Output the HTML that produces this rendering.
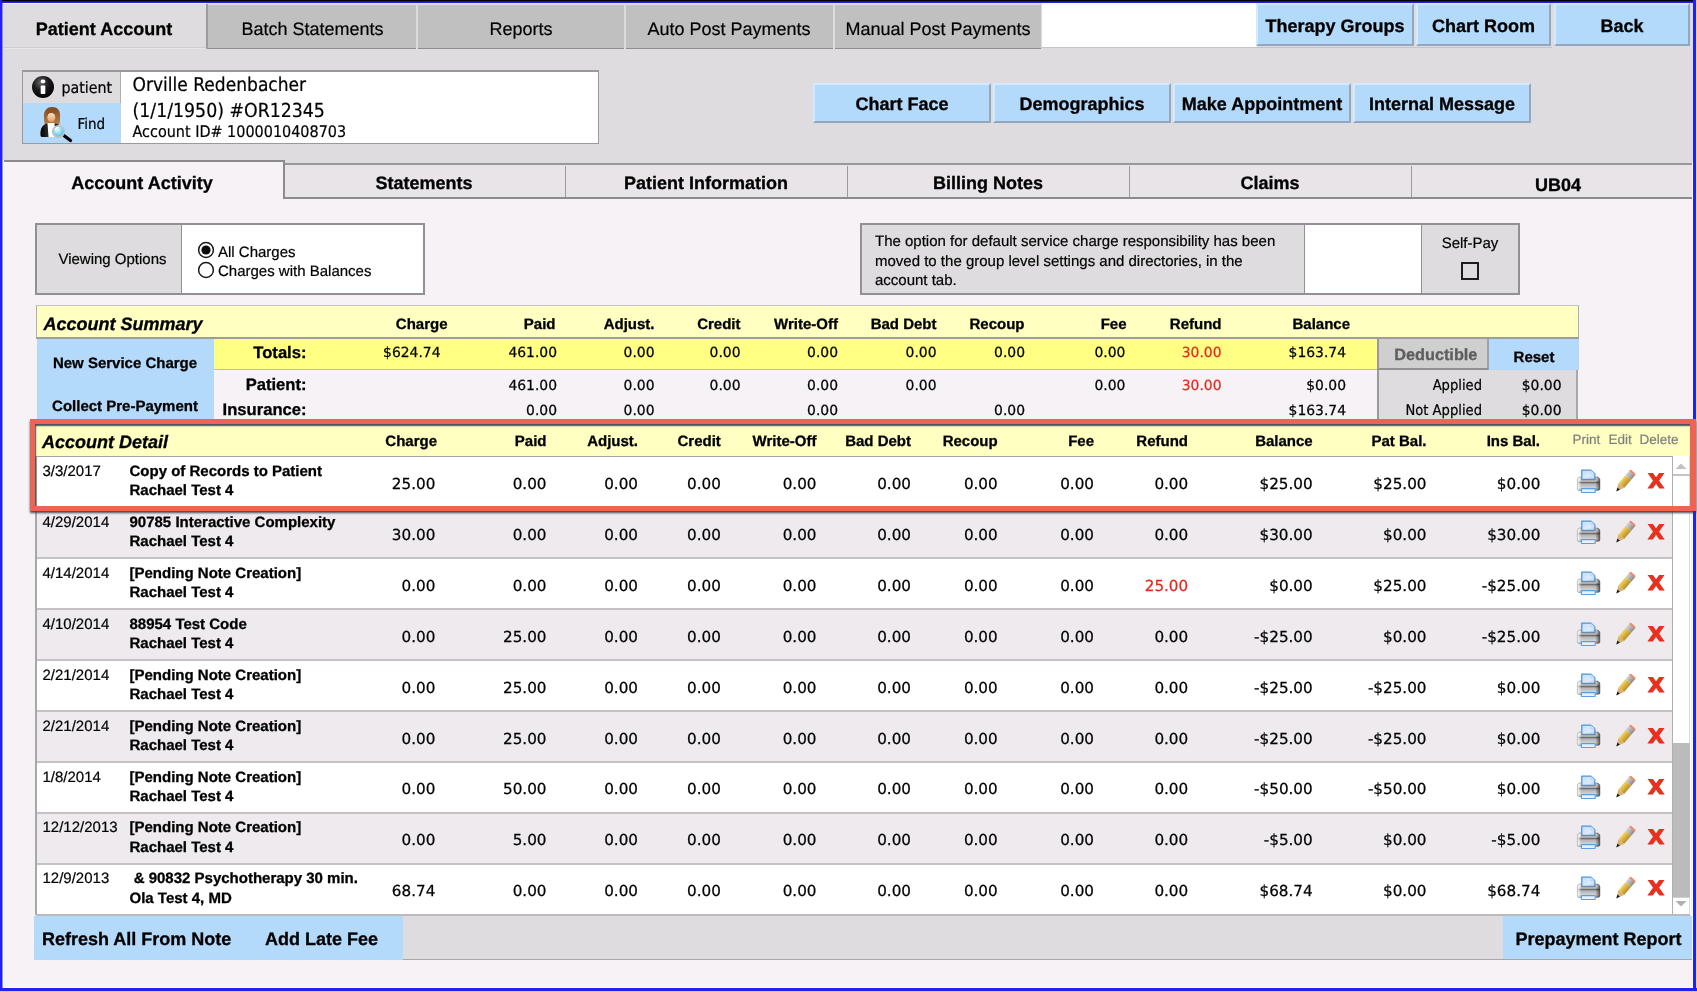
<!DOCTYPE html>
<html><head><meta charset="utf-8"><title>Patient Account</title>
<style>
html,body{margin:0;padding:0;}
body{width:1697px;height:992px;overflow:hidden;position:relative;background:#f6f2f6;font-family:"Liberation Sans", Arial, sans-serif;color:#000;text-rendering:geometricPrecision;}
#app{position:absolute;left:0;top:0;width:1697px;height:992px;will-change:transform;}
.a{position:absolute;white-space:nowrap;}
.t{position:absolute;white-space:nowrap;line-height:1;-webkit-text-stroke:0.2px currentColor;}
.b{font-weight:bold;-webkit-text-stroke:0.3px currentColor;}
.r{text-align:right;}
.c{text-align:center;}
.tah{font-family:"DejaVu Sans Condensed", "DejaVu Sans", "Liberation Sans", sans-serif;}
.btn{position:absolute;background:#b4dafb;box-sizing:border-box;border-top:2px solid #d2eafd;border-left:2px solid #d2eafd;border-right:2px solid #93a8c0;border-bottom:2px solid #93a8c0;font-weight:bold;font-size:18px;text-align:center;white-space:nowrap;-webkit-text-stroke:0.3px #000;}
.tab{position:absolute;background:#c0c0c0;box-sizing:border-box;border-top:1px solid #deded8;border-bottom:1px solid #8e8e8e;}
.red{color:#e8281e;}
.ver{font-family:"DejaVu Sans","Liberation Sans",sans-serif;-webkit-text-stroke:0.25px currentColor;}
</style></head>
<body>
<div id="app">
<div class="a" style="left:0px;top:0px;width:1697px;height:160px;background:#dedcde;"></div>
<div class="a" style="left:206px;top:4px;width:836px;height:45px;background:#dcdcdc;"></div>
<div class="a" style="left:206px;top:4px;width:2px;height:45px;background:#9c9c9c;"></div>
<div class="tab" style="left:208px;top:4px;width:208px;height:45px;"></div>
<div class="tab" style="left:418px;top:4px;width:206px;height:45px;"></div>
<div class="tab" style="left:626px;top:4px;width:207px;height:45px;"></div>
<div class="tab" style="left:835px;top:4px;width:206px;height:45px;"></div>
<div class="a" style="left:3px;top:47px;width:203px;height:1px;background:#cfcdcf;"></div>
<div class="a" style="left:3px;top:48px;width:203px;height:1px;background:#e8e7e8;"></div>
<div class="a" style="left:3px;top:3px;width:203px;height:1px;background:#f4f4f4;"></div>
<div class="t b" style="left:-196px;width:600px;text-align:center;top:20.36px;font-size:18px;">Patient Account</div>
<div class="t " style="left:12.5px;width:600px;text-align:center;top:20.36px;font-size:18px;">Batch Statements</div>
<div class="t " style="left:221px;width:600px;text-align:center;top:20.36px;font-size:18px;">Reports</div>
<div class="t " style="left:429px;width:600px;text-align:center;top:20.36px;font-size:18px;">Auto Post Payments</div>
<div class="t " style="left:638px;width:600px;text-align:center;top:20.36px;font-size:18px;">Manual Post Payments</div>
<div class="a" style="left:1042px;top:3px;width:215px;height:44px;background:#ffffff;"></div>
<div class="a" style="left:1042px;top:47px;width:510px;height:1px;background:#c9c5c5;"></div>
<div class="btn" style="left:1256px;top:3px;width:158px;height:43px;line-height:42px;">Therapy Groups</div>
<div class="btn" style="left:1416px;top:3px;width:135px;height:43px;line-height:42px;">Chart Room</div>
<div class="btn" style="left:1554px;top:3px;width:136px;height:43px;line-height:42px;">Back</div>
<div class="a" style="left:22px;top:70px;width:577px;height:74px;background:#ffffff;box-sizing:border-box;border:1px solid #9a9a9a;border-top:2px solid #9a9a9a;"></div>
<div class="a" style="left:23px;top:72px;width:97px;height:31px;background:#dedcde;border-right:1px solid #b0b0b0;border-bottom:1px solid #c8c8c8;"></div>
<div class="a" style="left:23px;top:103px;width:98px;height:40px;background:#b4dafb;"></div>
<svg class="a" style="left:31px;top:75px" width="24" height="24" viewBox="0 0 24 24">
<defs><radialGradient id="ig" cx="0.4" cy="0.3" r="0.75"><stop offset="0" stop-color="#6a6a6a"/><stop offset="0.45" stop-color="#1c1c1c"/><stop offset="1" stop-color="#000"/></radialGradient></defs>
<circle cx="12" cy="12" r="11" fill="url(#ig)"/>
<rect x="9.7" y="4.6" width="4.6" height="3.6" rx="1.6" fill="#fff"/>
<rect x="9.7" y="10.4" width="4.6" height="8.6" rx="0.8" fill="#fff"/>
</svg>
<svg class="a" style="left:38.8px;top:106.3px" width="36" height="38" viewBox="0 0 36 38">
<defs>
<linearGradient id="hair" x1="0" y1="0" x2="0" y2="1"><stop offset="0" stop-color="#7a4a1e"/><stop offset="1" stop-color="#b8804a"/></linearGradient>
<linearGradient id="skin" x1="0" y1="0" x2="0" y2="1"><stop offset="0" stop-color="#fbe3cc"/><stop offset="1" stop-color="#e39a5a"/></linearGradient>
<linearGradient id="suit" x1="0" y1="0" x2="1" y2="0"><stop offset="0" stop-color="#000"/><stop offset="0.5" stop-color="#3a3a3a"/><stop offset="1" stop-color="#111"/></linearGradient>
<radialGradient id="lens" cx="0.4" cy="0.35" r="0.7"><stop offset="0" stop-color="#e8fbff"/><stop offset="0.6" stop-color="#7fd4ee"/><stop offset="1" stop-color="#4ab6dc"/></radialGradient>
</defs>
<path d="M5 12 C4 4 9 1 13 1 C18 1 22 4 21 12 C21 16 20.5 18 20 19 L6 19 C5.5 17 5 15 5 12Z" fill="url(#hair)"/>
<path d="M1.5 29 C1 22 4 18.5 8 17.5 L17 17.5 C20 18.5 21.5 21 22 25 L22 31 L3 31 C2 31 1.5 30 1.5 29Z" fill="url(#suit)"/>
<path d="M8.5 17 L15.5 17 L16.5 31 L9.5 31Z" fill="#fff"/>
<ellipse cx="12.3" cy="11.5" rx="4" ry="4.6" fill="url(#skin)"/>
<path d="M8 10 C9 6 13 5 17 8 C16 4.5 12 3.5 9.5 5 C8 6.5 7.6 8 8 10Z" fill="#8a5424"/>
<path d="M23.5 28.5 L31.5 34.5" stroke="#000" stroke-width="3.4" stroke-linecap="round"/>
<circle cx="19.5" cy="25.5" r="5.8" fill="url(#lens)" stroke="#b9c6cc" stroke-width="1.6"/>
<path d="M16 24 A4 4 0 0 1 20 21.3" stroke="#fff" stroke-width="1.3" fill="none" opacity="0.9"/>
</svg>
<div class="t tah" style="left:61.5px;top:80.23px;font-size:15.8px;">patient</div>
<div class="t tah" style="left:77.5px;top:117.1px;font-size:15px;">Find</div>
<div class="t tah" style="left:132.5px;top:76.32px;font-size:19px;">Orville Redenbacher</div>
<div class="t tah" style="left:132.5px;top:100.66px;font-size:19.3px;">(1/1/1950) #OR12345</div>
<div class="t tah" style="left:132.5px;top:123.86px;font-size:16px;">Account ID# 1000010408703</div>
<div class="btn" style="left:813px;top:83px;width:178px;height:40px;line-height:38.5px;">Chart Face</div>
<div class="btn" style="left:993px;top:83px;width:178px;height:40px;line-height:38.5px;">Demographics</div>
<div class="btn" style="left:1173px;top:83px;width:178px;height:40px;line-height:38.5px;">Make Appointment</div>
<div class="btn" style="left:1353px;top:83px;width:178px;height:40px;line-height:38.5px;">Internal Message</div>
<div class="a" style="left:2px;top:160px;width:1692px;height:39px;background:#f6f2f6;"></div>
<div class="a" style="left:284px;top:160px;width:1410px;height:3px;background:#dedcde;"></div>
<div class="a" style="left:284px;top:163px;width:1410px;height:36px;background:#e8e4e8;box-sizing:border-box;border-top:2px solid #999799;border-bottom:2px solid #8c8c8c;"></div>
<div class="a" style="left:2px;top:160px;width:283px;height:2px;background:#8c8a8c;"></div>
<div class="a" style="left:283px;top:160px;width:2px;height:39px;background:#8c8c8c;"></div>
<div class="a" style="left:565px;top:166px;width:1px;height:31px;background:#9a9a9a;"></div>
<div class="a" style="left:847px;top:166px;width:1px;height:31px;background:#9a9a9a;"></div>
<div class="a" style="left:1129px;top:166px;width:1px;height:31px;background:#9a9a9a;"></div>
<div class="a" style="left:1411px;top:166px;width:1px;height:31px;background:#9a9a9a;"></div>
<div class="t b" style="left:-158px;width:600px;text-align:center;top:173.96px;font-size:18px;">Account Activity</div>
<div class="t b" style="left:124px;width:600px;text-align:center;top:173.96px;font-size:18px;">Statements</div>
<div class="t b" style="left:406px;width:600px;text-align:center;top:173.96px;font-size:18px;">Patient Information</div>
<div class="t b" style="left:688px;width:600px;text-align:center;top:173.96px;font-size:18px;">Billing Notes</div>
<div class="t b" style="left:970px;width:600px;text-align:center;top:173.96px;font-size:18px;">Claims</div>
<div class="t b" style="left:1258px;width:600px;text-align:center;top:175.96px;font-size:18px;">UB04</div>
<div class="a" style="left:35px;top:223px;width:390px;height:72px;background:#ffffff;box-sizing:border-box;border:2px solid #929092;"></div>
<div class="a" style="left:37px;top:225px;width:144px;height:68px;background:#dedcde;border-right:1px solid #929092;"></div>
<div class="t " style="left:-187.5px;width:600px;text-align:center;top:252.4px;font-size:15px;">Viewing Options</div>
<div class="t " style="left:218px;top:244.9px;font-size:15px;">All Charges</div>
<div class="t " style="left:218px;top:264.1px;font-size:15px;">Charges with Balances</div>
<svg class="a" style="left:197px;top:241px" width="18" height="18" viewBox="0 0 18 18"><circle cx="9" cy="9" r="7.4" fill="#fff" stroke="#1a1a1a" stroke-width="1.5"/><circle cx="9" cy="9" r="4.6" fill="#0a0a0a"/></svg>
<svg class="a" style="left:197px;top:261px" width="18" height="18" viewBox="0 0 18 18"><circle cx="9" cy="9" r="7.4" fill="#fff" stroke="#1a1a1a" stroke-width="1.5"/></svg>
<div class="a" style="left:860px;top:223px;width:660px;height:72px;background:#dedcde;box-sizing:border-box;border:2px solid #929092;"></div>
<div class="a" style="left:1304px;top:225px;width:116px;height:68px;background:#ffffff;border-left:1px solid #929092;border-right:1px solid #929092;"></div>
<div class="t " style="left:875px;top:234.4px;font-size:15px;">The option for default service charge responsibility has been</div>
<div class="t " style="left:875px;top:253.9px;font-size:15px;">moved to the group level settings and directories, in the</div>
<div class="t " style="left:875px;top:273.4px;font-size:15px;">account tab.</div>
<div class="t " style="left:1170px;width:600px;text-align:center;top:235.9px;font-size:15px;">Self-Pay</div>
<div class="a" style="left:1461px;top:262px;width:14px;height:14px;border:2px solid #1c1c1c;background:#dedcde;"></div>
<div class="a" style="left:36px;top:305px;width:1543px;height:34px;background:#ffffc2;box-sizing:border-box;border:1px solid #b0aeb0;border-top:1px solid #c6c2c6;border-bottom:2px solid #9e9c9e;"></div>
<div class="t b" style="left:43.5px;top:315.36px;font-size:18px;font-style:italic;">Account Summary</div>
<div class="t b" style="right:1249.5px;top:316.7px;font-size:15px;">Charge</div>
<div class="t b" style="right:1141.5px;top:316.7px;font-size:15px;">Paid</div>
<div class="t b" style="right:1042.5px;top:316.7px;font-size:15px;">Adjust.</div>
<div class="t b" style="right:956.5px;top:316.7px;font-size:15px;">Credit</div>
<div class="t b" style="right:859px;top:316.7px;font-size:15px;">Write-Off</div>
<div class="t b" style="right:760.5px;top:316.7px;font-size:15px;">Bad Debt</div>
<div class="t b" style="right:672.5px;top:316.7px;font-size:15px;">Recoup</div>
<div class="t b" style="right:570.5px;top:316.7px;font-size:15px;">Fee</div>
<div class="t b" style="right:475.5px;top:316.7px;font-size:15px;">Refund</div>
<div class="t b" style="right:347px;top:316.7px;font-size:15px;">Balance</div>
<div class="a" style="left:37px;top:339px;width:177px;height:80px;background:#b4dafb;"></div>
<div class="a" style="left:214px;top:339px;width:1163px;height:30px;background:#ffff84;border-bottom:1px solid #c0bcc0;"></div>
<div class="t b" style="left:-175px;width:600px;text-align:center;top:356.2px;font-size:15px;">New Service Charge</div>
<div class="t b" style="left:-175px;width:600px;text-align:center;top:399.2px;font-size:15px;">Collect Pre-Payment</div>
<div class="t b" style="right:1390.5px;top:345.05px;font-size:16.6px;">Totals:</div>
<div class="t b" style="right:1390.5px;top:376.85px;font-size:16.6px;">Patient:</div>
<div class="t b" style="right:1390.5px;top:401.85px;font-size:16.6px;">Insurance:</div>
<div class="t ver" style="right:1256.5px;top:346.73px;font-size:13.9px;">$624.74</div>
<div class="t ver" style="right:1140px;top:346.73px;font-size:13.9px;">461.00</div>
<div class="t ver" style="right:1042.5px;top:346.73px;font-size:13.9px;">0.00</div>
<div class="t ver" style="right:956.5px;top:346.73px;font-size:13.9px;">0.00</div>
<div class="t ver" style="right:859px;top:346.73px;font-size:13.9px;">0.00</div>
<div class="t ver" style="right:760.5px;top:346.73px;font-size:13.9px;">0.00</div>
<div class="t ver" style="right:672px;top:346.73px;font-size:13.9px;">0.00</div>
<div class="t ver" style="right:571.7px;top:346.73px;font-size:13.9px;">0.00</div>
<div class="t ver red" style="right:475.5px;top:346.73px;font-size:13.9px;">30.00</div>
<div class="t ver" style="right:351px;top:346.73px;font-size:13.9px;">$163.74</div>
<div class="t ver" style="right:1140px;top:379.73px;font-size:13.9px;">461.00</div>
<div class="t ver" style="right:1042.5px;top:379.73px;font-size:13.9px;">0.00</div>
<div class="t ver" style="right:956.5px;top:379.73px;font-size:13.9px;">0.00</div>
<div class="t ver" style="right:859px;top:379.73px;font-size:13.9px;">0.00</div>
<div class="t ver" style="right:760.5px;top:379.73px;font-size:13.9px;">0.00</div>
<div class="t ver" style="right:571.7px;top:379.73px;font-size:13.9px;">0.00</div>
<div class="t ver red" style="right:475.5px;top:379.73px;font-size:13.9px;">30.00</div>
<div class="t ver" style="right:351px;top:379.73px;font-size:13.9px;">$0.00</div>
<div class="t ver" style="right:1140px;top:405.03px;font-size:13.9px;">0.00</div>
<div class="t ver" style="right:1042.5px;top:405.03px;font-size:13.9px;">0.00</div>
<div class="t ver" style="right:859px;top:405.03px;font-size:13.9px;">0.00</div>
<div class="t ver" style="right:672px;top:405.03px;font-size:13.9px;">0.00</div>
<div class="t ver" style="right:351px;top:405.03px;font-size:13.9px;">$163.74</div>
<div class="a" style="left:1377px;top:339px;width:112px;height:31px;background:#cfcfcf;box-sizing:border-box;border-left:2px solid #9a9a9a;border-right:2px solid #a2a2a2;border-bottom:2px solid #909090;"></div>
<div class="t b" style="left:1135.8px;width:600px;text-align:center;top:347.1px;font-size:16.3px;color:#5e5e5e;">Deductible</div>
<div class="a" style="left:1489px;top:339px;width:90px;height:31px;background:#b4dafb;"></div>
<div class="t b" style="left:1234px;width:600px;text-align:center;top:349.9px;font-size:15px;">Reset</div>
<div class="a" style="left:1377px;top:370px;width:201px;height:49px;background:#dedcde;box-sizing:border-box;border-left:2px solid #9a9a9a;border-right:2px solid #a8a8a8;"></div>
<div class="t tah" style="right:215px;top:378.94px;font-size:14.6px;">Applied</div>
<div class="t tah" style="right:215px;top:403.94px;font-size:14.6px;">Not Applied</div>
<div class="t ver" style="right:135.5px;top:379.73px;font-size:13.9px;">$0.00</div>
<div class="t ver" style="right:135.5px;top:404.73px;font-size:13.9px;">$0.00</div>
<div class="a" style="left:36px;top:425px;width:1655px;height:31px;background:#ffffc2;border-bottom:1px solid #a8a8a8;"></div>
<div class="t b" style="left:42px;top:433.36px;font-size:18px;font-style:italic;">Account Detail</div>
<div class="t b" style="right:1260px;top:434.0px;font-size:15px;">Charge</div>
<div class="t b" style="right:1150.5px;top:434.0px;font-size:15px;">Paid</div>
<div class="t b" style="right:1059px;top:434.0px;font-size:15px;">Adjust.</div>
<div class="t b" style="right:976.2px;top:434.0px;font-size:15px;">Credit</div>
<div class="t b" style="right:880.5px;top:434.0px;font-size:15px;">Write-Off</div>
<div class="t b" style="right:786px;top:434.0px;font-size:15px;">Bad Debt</div>
<div class="t b" style="right:699.3px;top:434.0px;font-size:15px;">Recoup</div>
<div class="t b" style="right:603px;top:434.0px;font-size:15px;">Fee</div>
<div class="t b" style="right:509px;top:434.0px;font-size:15px;">Refund</div>
<div class="t b" style="right:384.29999999999995px;top:434.0px;font-size:15px;">Balance</div>
<div class="t b" style="right:270.5px;top:434.0px;font-size:15px;">Pat Bal.</div>
<div class="t b" style="right:157px;top:434.0px;font-size:15px;">Ins Bal.</div>
<div class="t " style="left:1572.5px;top:432.67px;font-size:13.5px;color:#7f7f7f;">Print</div>
<div class="t " style="left:1608.5px;top:432.67px;font-size:13.5px;color:#7f7f7f;">Edit</div>
<div class="t " style="left:1639.5px;top:432.67px;font-size:13.5px;color:#7f7f7f;">Delete</div>
<div class="a" style="left:35px;top:456px;width:2px;height:459px;background:#a8a8a8;"></div>
<div class="a" style="left:37px;top:456.7px;width:1635px;height:50.9px;background:#ffffff;"></div>
<div class="t " style="left:42.5px;top:464.1px;font-size:15px;">3/3/2017</div>
<div class="t b" style="left:129.5px;top:464.1px;font-size:15px;">Copy of Records to Patient</div>
<div class="t b" style="left:129.5px;top:483.4px;font-size:15px;">Rachael Test 4</div>
<div class="t ver" style="right:1261.7px;top:477.03px;font-size:15.2px;">25.00</div>
<div class="t ver" style="right:1150.5px;top:477.03px;font-size:15.2px;">0.00</div>
<div class="t ver" style="right:1059px;top:477.03px;font-size:15.2px;">0.00</div>
<div class="t ver" style="right:976.2px;top:477.03px;font-size:15.2px;">0.00</div>
<div class="t ver" style="right:880.5px;top:477.03px;font-size:15.2px;">0.00</div>
<div class="t ver" style="right:786px;top:477.03px;font-size:15.2px;">0.00</div>
<div class="t ver" style="right:699.3px;top:477.03px;font-size:15.2px;">0.00</div>
<div class="t ver" style="right:603px;top:477.03px;font-size:15.2px;">0.00</div>
<div class="t ver" style="right:508.79999999999995px;top:477.03px;font-size:15.2px;">0.00</div>
<div class="t ver" style="right:384.29999999999995px;top:477.03px;font-size:15.2px;">$25.00</div>
<div class="t ver" style="right:270.5px;top:477.03px;font-size:15.2px;">$25.00</div>
<div class="t ver" style="right:156.70000000000005px;top:477.03px;font-size:15.2px;">$0.00</div>
<svg class="a" style="left:1575.9px;top:469.1px" width="25" height="24.6" viewBox="0 0 26 26" preserveAspectRatio="none">
<defs>
<linearGradient id="pb" x1="0" y1="0" x2="0" y2="1"><stop offset="0" stop-color="#f0f0f0"/><stop offset="0.3" stop-color="#cacaca"/><stop offset="0.42" stop-color="#6a6a6a"/><stop offset="0.52" stop-color="#b4b4b4"/><stop offset="0.8" stop-color="#d0d0d0"/><stop offset="1" stop-color="#9c9c9c"/></linearGradient>
<linearGradient id="pp" x1="0" y1="0" x2="1" y2="1"><stop offset="0" stop-color="#c4dcf8"/><stop offset="0.6" stop-color="#dcebfb"/><stop offset="1" stop-color="#b4d2f4"/></linearGradient>
<linearGradient id="ps" x1="0" y1="0" x2="1" y2="0"><stop offset="0" stop-color="#ffffff" stop-opacity="0.9"/><stop offset="0.18" stop-color="#ffffff" stop-opacity="0"/><stop offset="0.8" stop-color="#000" stop-opacity="0"/><stop offset="1" stop-color="#000" stop-opacity="0.55"/></linearGradient>
</defs>
<path d="M6 1.3 L15.5 1.3 L19.6 5 L19.6 11 L6 11Z" fill="url(#pp)" stroke="#4b94dc" stroke-width="1.3" stroke-linejoin="round"/>
<path d="M15.5 1.5 L15.5 5 L19.4 5Z" fill="#eaf4fe" stroke="#8fbdee" stroke-width="0.6"/>
<path d="M4.5 8.5 L5.5 8.5 L5.5 11.6 L20.1 11.6 L20.1 8.5 L21.5 8.5 C23.6 8.5 24.8 10 24.8 11.5 L24.8 21 C24.8 22 24.3 22.5 23.3 22.5 L3 22.5 C2 22.5 1.5 22 1.5 21 L1.5 11.5 C1.5 10 2.5 8.5 4.5 8.5Z" fill="url(#pb)" stroke="#858585" stroke-width="0.9"/>
<path d="M4.5 8.5 L5.5 8.5 L5.5 11.6 L20.1 11.6 L20.1 8.5 L21.5 8.5 C23.6 8.5 24.8 10 24.8 11.5 L24.8 21 C24.8 22 24.3 22.5 23.3 22.5 L3 22.5 C2 22.5 1.5 22 1.5 21 L1.5 11.5 C1.5 10 2.5 8.5 4.5 8.5Z" fill="url(#ps)"/>
<rect x="5.6" y="20.8" width="14.4" height="4" rx="0.6" fill="#e8f1fc" stroke="#5a9fe2" stroke-width="1.2"/>
</svg>
<svg class="a" style="left:1612px;top:469.1px" width="25" height="25" viewBox="0 0 24 24">
<defs><linearGradient id="py" x1="0" y1="0" x2="1" y2="0"><stop offset="0" stop-color="#eed878"/><stop offset="0.45" stop-color="#dcb53e"/><stop offset="1" stop-color="#b88c2c"/></linearGradient>
<linearGradient id="pf" x1="0" y1="0" x2="1" y2="0"><stop offset="0" stop-color="#d4d4d4"/><stop offset="0.5" stop-color="#b0b0b0"/><stop offset="1" stop-color="#8a8a8a"/></linearGradient></defs>
<g transform="translate(12.3 12) rotate(41)">
<rect x="-3.6" y="-12.4" width="7.2" height="3" rx="1.4" fill="#f0896c"/>
<rect x="-3.6" y="-10.4" width="7.2" height="5.2" fill="url(#pf)"/>
<rect x="-3.6" y="-5.2" width="7.2" height="10.4" fill="url(#py)"/>
<path d="M-3.6 5.2 L3.6 5.2 L0.9 10.4 L-0.9 10.4Z" fill="#d8b070"/>
<path d="M-1.6 9 L1.6 9 L0 12.6Z" fill="#1a1a1a"/>
</g>
</svg>
<div class="t b" style="left:1355.8px;width:600px;text-align:center;top:472.14px;font-size:19.8px;color:#e8301f;font-family:'DejaVu Sans','Liberation Sans',sans-serif;-webkit-text-stroke:1px #e8301f;transform:scaleX(1.06);">X</div>
<div class="a" style="left:37px;top:507.6px;width:1635px;height:50.9px;background:#eeeaee;"></div>
<div class="t " style="left:42.5px;top:515.0px;font-size:15px;">4/29/2014</div>
<div class="t b" style="left:129.5px;top:515.0px;font-size:15px;">90785 Interactive Complexity</div>
<div class="t b" style="left:129.5px;top:534.3px;font-size:15px;">Rachael Test 4</div>
<div class="t ver" style="right:1261.7px;top:527.93px;font-size:15.2px;">30.00</div>
<div class="t ver" style="right:1150.5px;top:527.93px;font-size:15.2px;">0.00</div>
<div class="t ver" style="right:1059px;top:527.93px;font-size:15.2px;">0.00</div>
<div class="t ver" style="right:976.2px;top:527.93px;font-size:15.2px;">0.00</div>
<div class="t ver" style="right:880.5px;top:527.93px;font-size:15.2px;">0.00</div>
<div class="t ver" style="right:786px;top:527.93px;font-size:15.2px;">0.00</div>
<div class="t ver" style="right:699.3px;top:527.93px;font-size:15.2px;">0.00</div>
<div class="t ver" style="right:603px;top:527.93px;font-size:15.2px;">0.00</div>
<div class="t ver" style="right:508.79999999999995px;top:527.93px;font-size:15.2px;">0.00</div>
<div class="t ver" style="right:384.29999999999995px;top:527.93px;font-size:15.2px;">$30.00</div>
<div class="t ver" style="right:270.5px;top:527.93px;font-size:15.2px;">$0.00</div>
<div class="t ver" style="right:156.70000000000005px;top:527.93px;font-size:15.2px;">$30.00</div>
<svg class="a" style="left:1575.9px;top:520.0px" width="25" height="24.6" viewBox="0 0 26 26" preserveAspectRatio="none">
<defs>
<linearGradient id="pb" x1="0" y1="0" x2="0" y2="1"><stop offset="0" stop-color="#f0f0f0"/><stop offset="0.3" stop-color="#cacaca"/><stop offset="0.42" stop-color="#6a6a6a"/><stop offset="0.52" stop-color="#b4b4b4"/><stop offset="0.8" stop-color="#d0d0d0"/><stop offset="1" stop-color="#9c9c9c"/></linearGradient>
<linearGradient id="pp" x1="0" y1="0" x2="1" y2="1"><stop offset="0" stop-color="#c4dcf8"/><stop offset="0.6" stop-color="#dcebfb"/><stop offset="1" stop-color="#b4d2f4"/></linearGradient>
<linearGradient id="ps" x1="0" y1="0" x2="1" y2="0"><stop offset="0" stop-color="#ffffff" stop-opacity="0.9"/><stop offset="0.18" stop-color="#ffffff" stop-opacity="0"/><stop offset="0.8" stop-color="#000" stop-opacity="0"/><stop offset="1" stop-color="#000" stop-opacity="0.55"/></linearGradient>
</defs>
<path d="M6 1.3 L15.5 1.3 L19.6 5 L19.6 11 L6 11Z" fill="url(#pp)" stroke="#4b94dc" stroke-width="1.3" stroke-linejoin="round"/>
<path d="M15.5 1.5 L15.5 5 L19.4 5Z" fill="#eaf4fe" stroke="#8fbdee" stroke-width="0.6"/>
<path d="M4.5 8.5 L5.5 8.5 L5.5 11.6 L20.1 11.6 L20.1 8.5 L21.5 8.5 C23.6 8.5 24.8 10 24.8 11.5 L24.8 21 C24.8 22 24.3 22.5 23.3 22.5 L3 22.5 C2 22.5 1.5 22 1.5 21 L1.5 11.5 C1.5 10 2.5 8.5 4.5 8.5Z" fill="url(#pb)" stroke="#858585" stroke-width="0.9"/>
<path d="M4.5 8.5 L5.5 8.5 L5.5 11.6 L20.1 11.6 L20.1 8.5 L21.5 8.5 C23.6 8.5 24.8 10 24.8 11.5 L24.8 21 C24.8 22 24.3 22.5 23.3 22.5 L3 22.5 C2 22.5 1.5 22 1.5 21 L1.5 11.5 C1.5 10 2.5 8.5 4.5 8.5Z" fill="url(#ps)"/>
<rect x="5.6" y="20.8" width="14.4" height="4" rx="0.6" fill="#e8f1fc" stroke="#5a9fe2" stroke-width="1.2"/>
</svg>
<svg class="a" style="left:1612px;top:520.0px" width="25" height="25" viewBox="0 0 24 24">
<defs><linearGradient id="py" x1="0" y1="0" x2="1" y2="0"><stop offset="0" stop-color="#eed878"/><stop offset="0.45" stop-color="#dcb53e"/><stop offset="1" stop-color="#b88c2c"/></linearGradient>
<linearGradient id="pf" x1="0" y1="0" x2="1" y2="0"><stop offset="0" stop-color="#d4d4d4"/><stop offset="0.5" stop-color="#b0b0b0"/><stop offset="1" stop-color="#8a8a8a"/></linearGradient></defs>
<g transform="translate(12.3 12) rotate(41)">
<rect x="-3.6" y="-12.4" width="7.2" height="3" rx="1.4" fill="#f0896c"/>
<rect x="-3.6" y="-10.4" width="7.2" height="5.2" fill="url(#pf)"/>
<rect x="-3.6" y="-5.2" width="7.2" height="10.4" fill="url(#py)"/>
<path d="M-3.6 5.2 L3.6 5.2 L0.9 10.4 L-0.9 10.4Z" fill="#d8b070"/>
<path d="M-1.6 9 L1.6 9 L0 12.6Z" fill="#1a1a1a"/>
</g>
</svg>
<div class="t b" style="left:1355.8px;width:600px;text-align:center;top:523.04px;font-size:19.8px;color:#e8301f;font-family:'DejaVu Sans','Liberation Sans',sans-serif;-webkit-text-stroke:1px #e8301f;transform:scaleX(1.06);">X</div>
<div class="a" style="left:37px;top:558.5px;width:1635px;height:50.9px;background:#ffffff;"></div>
<div class="t " style="left:42.5px;top:565.9px;font-size:15px;">4/14/2014</div>
<div class="t b" style="left:129.5px;top:565.9px;font-size:15px;">[Pending Note Creation]</div>
<div class="t b" style="left:129.5px;top:585.2px;font-size:15px;">Rachael Test 4</div>
<div class="t ver" style="right:1261.7px;top:578.83px;font-size:15.2px;">0.00</div>
<div class="t ver" style="right:1150.5px;top:578.83px;font-size:15.2px;">0.00</div>
<div class="t ver" style="right:1059px;top:578.83px;font-size:15.2px;">0.00</div>
<div class="t ver" style="right:976.2px;top:578.83px;font-size:15.2px;">0.00</div>
<div class="t ver" style="right:880.5px;top:578.83px;font-size:15.2px;">0.00</div>
<div class="t ver" style="right:786px;top:578.83px;font-size:15.2px;">0.00</div>
<div class="t ver" style="right:699.3px;top:578.83px;font-size:15.2px;">0.00</div>
<div class="t ver" style="right:603px;top:578.83px;font-size:15.2px;">0.00</div>
<div class="t ver red" style="right:508.79999999999995px;top:578.83px;font-size:15.2px;">25.00</div>
<div class="t ver" style="right:384.29999999999995px;top:578.83px;font-size:15.2px;">$0.00</div>
<div class="t ver" style="right:270.5px;top:578.83px;font-size:15.2px;">$25.00</div>
<div class="t ver" style="right:156.70000000000005px;top:578.83px;font-size:15.2px;">-$25.00</div>
<svg class="a" style="left:1575.9px;top:570.9px" width="25" height="24.6" viewBox="0 0 26 26" preserveAspectRatio="none">
<defs>
<linearGradient id="pb" x1="0" y1="0" x2="0" y2="1"><stop offset="0" stop-color="#f0f0f0"/><stop offset="0.3" stop-color="#cacaca"/><stop offset="0.42" stop-color="#6a6a6a"/><stop offset="0.52" stop-color="#b4b4b4"/><stop offset="0.8" stop-color="#d0d0d0"/><stop offset="1" stop-color="#9c9c9c"/></linearGradient>
<linearGradient id="pp" x1="0" y1="0" x2="1" y2="1"><stop offset="0" stop-color="#c4dcf8"/><stop offset="0.6" stop-color="#dcebfb"/><stop offset="1" stop-color="#b4d2f4"/></linearGradient>
<linearGradient id="ps" x1="0" y1="0" x2="1" y2="0"><stop offset="0" stop-color="#ffffff" stop-opacity="0.9"/><stop offset="0.18" stop-color="#ffffff" stop-opacity="0"/><stop offset="0.8" stop-color="#000" stop-opacity="0"/><stop offset="1" stop-color="#000" stop-opacity="0.55"/></linearGradient>
</defs>
<path d="M6 1.3 L15.5 1.3 L19.6 5 L19.6 11 L6 11Z" fill="url(#pp)" stroke="#4b94dc" stroke-width="1.3" stroke-linejoin="round"/>
<path d="M15.5 1.5 L15.5 5 L19.4 5Z" fill="#eaf4fe" stroke="#8fbdee" stroke-width="0.6"/>
<path d="M4.5 8.5 L5.5 8.5 L5.5 11.6 L20.1 11.6 L20.1 8.5 L21.5 8.5 C23.6 8.5 24.8 10 24.8 11.5 L24.8 21 C24.8 22 24.3 22.5 23.3 22.5 L3 22.5 C2 22.5 1.5 22 1.5 21 L1.5 11.5 C1.5 10 2.5 8.5 4.5 8.5Z" fill="url(#pb)" stroke="#858585" stroke-width="0.9"/>
<path d="M4.5 8.5 L5.5 8.5 L5.5 11.6 L20.1 11.6 L20.1 8.5 L21.5 8.5 C23.6 8.5 24.8 10 24.8 11.5 L24.8 21 C24.8 22 24.3 22.5 23.3 22.5 L3 22.5 C2 22.5 1.5 22 1.5 21 L1.5 11.5 C1.5 10 2.5 8.5 4.5 8.5Z" fill="url(#ps)"/>
<rect x="5.6" y="20.8" width="14.4" height="4" rx="0.6" fill="#e8f1fc" stroke="#5a9fe2" stroke-width="1.2"/>
</svg>
<svg class="a" style="left:1612px;top:570.9px" width="25" height="25" viewBox="0 0 24 24">
<defs><linearGradient id="py" x1="0" y1="0" x2="1" y2="0"><stop offset="0" stop-color="#eed878"/><stop offset="0.45" stop-color="#dcb53e"/><stop offset="1" stop-color="#b88c2c"/></linearGradient>
<linearGradient id="pf" x1="0" y1="0" x2="1" y2="0"><stop offset="0" stop-color="#d4d4d4"/><stop offset="0.5" stop-color="#b0b0b0"/><stop offset="1" stop-color="#8a8a8a"/></linearGradient></defs>
<g transform="translate(12.3 12) rotate(41)">
<rect x="-3.6" y="-12.4" width="7.2" height="3" rx="1.4" fill="#f0896c"/>
<rect x="-3.6" y="-10.4" width="7.2" height="5.2" fill="url(#pf)"/>
<rect x="-3.6" y="-5.2" width="7.2" height="10.4" fill="url(#py)"/>
<path d="M-3.6 5.2 L3.6 5.2 L0.9 10.4 L-0.9 10.4Z" fill="#d8b070"/>
<path d="M-1.6 9 L1.6 9 L0 12.6Z" fill="#1a1a1a"/>
</g>
</svg>
<div class="t b" style="left:1355.8px;width:600px;text-align:center;top:573.94px;font-size:19.8px;color:#e8301f;font-family:'DejaVu Sans','Liberation Sans',sans-serif;-webkit-text-stroke:1px #e8301f;transform:scaleX(1.06);">X</div>
<div class="a" style="left:37px;top:609.4px;width:1635px;height:50.9px;background:#eeeaee;"></div>
<div class="t " style="left:42.5px;top:616.8px;font-size:15px;">4/10/2014</div>
<div class="t b" style="left:129.5px;top:616.8px;font-size:15px;">88954 Test Code</div>
<div class="t b" style="left:129.5px;top:636.1px;font-size:15px;">Rachael Test 4</div>
<div class="t ver" style="right:1261.7px;top:629.73px;font-size:15.2px;">0.00</div>
<div class="t ver" style="right:1150.5px;top:629.73px;font-size:15.2px;">25.00</div>
<div class="t ver" style="right:1059px;top:629.73px;font-size:15.2px;">0.00</div>
<div class="t ver" style="right:976.2px;top:629.73px;font-size:15.2px;">0.00</div>
<div class="t ver" style="right:880.5px;top:629.73px;font-size:15.2px;">0.00</div>
<div class="t ver" style="right:786px;top:629.73px;font-size:15.2px;">0.00</div>
<div class="t ver" style="right:699.3px;top:629.73px;font-size:15.2px;">0.00</div>
<div class="t ver" style="right:603px;top:629.73px;font-size:15.2px;">0.00</div>
<div class="t ver" style="right:508.79999999999995px;top:629.73px;font-size:15.2px;">0.00</div>
<div class="t ver" style="right:384.29999999999995px;top:629.73px;font-size:15.2px;">-$25.00</div>
<div class="t ver" style="right:270.5px;top:629.73px;font-size:15.2px;">$0.00</div>
<div class="t ver" style="right:156.70000000000005px;top:629.73px;font-size:15.2px;">-$25.00</div>
<svg class="a" style="left:1575.9px;top:621.8px" width="25" height="24.6" viewBox="0 0 26 26" preserveAspectRatio="none">
<defs>
<linearGradient id="pb" x1="0" y1="0" x2="0" y2="1"><stop offset="0" stop-color="#f0f0f0"/><stop offset="0.3" stop-color="#cacaca"/><stop offset="0.42" stop-color="#6a6a6a"/><stop offset="0.52" stop-color="#b4b4b4"/><stop offset="0.8" stop-color="#d0d0d0"/><stop offset="1" stop-color="#9c9c9c"/></linearGradient>
<linearGradient id="pp" x1="0" y1="0" x2="1" y2="1"><stop offset="0" stop-color="#c4dcf8"/><stop offset="0.6" stop-color="#dcebfb"/><stop offset="1" stop-color="#b4d2f4"/></linearGradient>
<linearGradient id="ps" x1="0" y1="0" x2="1" y2="0"><stop offset="0" stop-color="#ffffff" stop-opacity="0.9"/><stop offset="0.18" stop-color="#ffffff" stop-opacity="0"/><stop offset="0.8" stop-color="#000" stop-opacity="0"/><stop offset="1" stop-color="#000" stop-opacity="0.55"/></linearGradient>
</defs>
<path d="M6 1.3 L15.5 1.3 L19.6 5 L19.6 11 L6 11Z" fill="url(#pp)" stroke="#4b94dc" stroke-width="1.3" stroke-linejoin="round"/>
<path d="M15.5 1.5 L15.5 5 L19.4 5Z" fill="#eaf4fe" stroke="#8fbdee" stroke-width="0.6"/>
<path d="M4.5 8.5 L5.5 8.5 L5.5 11.6 L20.1 11.6 L20.1 8.5 L21.5 8.5 C23.6 8.5 24.8 10 24.8 11.5 L24.8 21 C24.8 22 24.3 22.5 23.3 22.5 L3 22.5 C2 22.5 1.5 22 1.5 21 L1.5 11.5 C1.5 10 2.5 8.5 4.5 8.5Z" fill="url(#pb)" stroke="#858585" stroke-width="0.9"/>
<path d="M4.5 8.5 L5.5 8.5 L5.5 11.6 L20.1 11.6 L20.1 8.5 L21.5 8.5 C23.6 8.5 24.8 10 24.8 11.5 L24.8 21 C24.8 22 24.3 22.5 23.3 22.5 L3 22.5 C2 22.5 1.5 22 1.5 21 L1.5 11.5 C1.5 10 2.5 8.5 4.5 8.5Z" fill="url(#ps)"/>
<rect x="5.6" y="20.8" width="14.4" height="4" rx="0.6" fill="#e8f1fc" stroke="#5a9fe2" stroke-width="1.2"/>
</svg>
<svg class="a" style="left:1612px;top:621.8px" width="25" height="25" viewBox="0 0 24 24">
<defs><linearGradient id="py" x1="0" y1="0" x2="1" y2="0"><stop offset="0" stop-color="#eed878"/><stop offset="0.45" stop-color="#dcb53e"/><stop offset="1" stop-color="#b88c2c"/></linearGradient>
<linearGradient id="pf" x1="0" y1="0" x2="1" y2="0"><stop offset="0" stop-color="#d4d4d4"/><stop offset="0.5" stop-color="#b0b0b0"/><stop offset="1" stop-color="#8a8a8a"/></linearGradient></defs>
<g transform="translate(12.3 12) rotate(41)">
<rect x="-3.6" y="-12.4" width="7.2" height="3" rx="1.4" fill="#f0896c"/>
<rect x="-3.6" y="-10.4" width="7.2" height="5.2" fill="url(#pf)"/>
<rect x="-3.6" y="-5.2" width="7.2" height="10.4" fill="url(#py)"/>
<path d="M-3.6 5.2 L3.6 5.2 L0.9 10.4 L-0.9 10.4Z" fill="#d8b070"/>
<path d="M-1.6 9 L1.6 9 L0 12.6Z" fill="#1a1a1a"/>
</g>
</svg>
<div class="t b" style="left:1355.8px;width:600px;text-align:center;top:624.84px;font-size:19.8px;color:#e8301f;font-family:'DejaVu Sans','Liberation Sans',sans-serif;-webkit-text-stroke:1px #e8301f;transform:scaleX(1.06);">X</div>
<div class="a" style="left:37px;top:660.3px;width:1635px;height:50.9px;background:#ffffff;"></div>
<div class="t " style="left:42.5px;top:667.7px;font-size:15px;">2/21/2014</div>
<div class="t b" style="left:129.5px;top:667.7px;font-size:15px;">[Pending Note Creation]</div>
<div class="t b" style="left:129.5px;top:687.0px;font-size:15px;">Rachael Test 4</div>
<div class="t ver" style="right:1261.7px;top:680.63px;font-size:15.2px;">0.00</div>
<div class="t ver" style="right:1150.5px;top:680.63px;font-size:15.2px;">25.00</div>
<div class="t ver" style="right:1059px;top:680.63px;font-size:15.2px;">0.00</div>
<div class="t ver" style="right:976.2px;top:680.63px;font-size:15.2px;">0.00</div>
<div class="t ver" style="right:880.5px;top:680.63px;font-size:15.2px;">0.00</div>
<div class="t ver" style="right:786px;top:680.63px;font-size:15.2px;">0.00</div>
<div class="t ver" style="right:699.3px;top:680.63px;font-size:15.2px;">0.00</div>
<div class="t ver" style="right:603px;top:680.63px;font-size:15.2px;">0.00</div>
<div class="t ver" style="right:508.79999999999995px;top:680.63px;font-size:15.2px;">0.00</div>
<div class="t ver" style="right:384.29999999999995px;top:680.63px;font-size:15.2px;">-$25.00</div>
<div class="t ver" style="right:270.5px;top:680.63px;font-size:15.2px;">-$25.00</div>
<div class="t ver" style="right:156.70000000000005px;top:680.63px;font-size:15.2px;">$0.00</div>
<svg class="a" style="left:1575.9px;top:672.7px" width="25" height="24.6" viewBox="0 0 26 26" preserveAspectRatio="none">
<defs>
<linearGradient id="pb" x1="0" y1="0" x2="0" y2="1"><stop offset="0" stop-color="#f0f0f0"/><stop offset="0.3" stop-color="#cacaca"/><stop offset="0.42" stop-color="#6a6a6a"/><stop offset="0.52" stop-color="#b4b4b4"/><stop offset="0.8" stop-color="#d0d0d0"/><stop offset="1" stop-color="#9c9c9c"/></linearGradient>
<linearGradient id="pp" x1="0" y1="0" x2="1" y2="1"><stop offset="0" stop-color="#c4dcf8"/><stop offset="0.6" stop-color="#dcebfb"/><stop offset="1" stop-color="#b4d2f4"/></linearGradient>
<linearGradient id="ps" x1="0" y1="0" x2="1" y2="0"><stop offset="0" stop-color="#ffffff" stop-opacity="0.9"/><stop offset="0.18" stop-color="#ffffff" stop-opacity="0"/><stop offset="0.8" stop-color="#000" stop-opacity="0"/><stop offset="1" stop-color="#000" stop-opacity="0.55"/></linearGradient>
</defs>
<path d="M6 1.3 L15.5 1.3 L19.6 5 L19.6 11 L6 11Z" fill="url(#pp)" stroke="#4b94dc" stroke-width="1.3" stroke-linejoin="round"/>
<path d="M15.5 1.5 L15.5 5 L19.4 5Z" fill="#eaf4fe" stroke="#8fbdee" stroke-width="0.6"/>
<path d="M4.5 8.5 L5.5 8.5 L5.5 11.6 L20.1 11.6 L20.1 8.5 L21.5 8.5 C23.6 8.5 24.8 10 24.8 11.5 L24.8 21 C24.8 22 24.3 22.5 23.3 22.5 L3 22.5 C2 22.5 1.5 22 1.5 21 L1.5 11.5 C1.5 10 2.5 8.5 4.5 8.5Z" fill="url(#pb)" stroke="#858585" stroke-width="0.9"/>
<path d="M4.5 8.5 L5.5 8.5 L5.5 11.6 L20.1 11.6 L20.1 8.5 L21.5 8.5 C23.6 8.5 24.8 10 24.8 11.5 L24.8 21 C24.8 22 24.3 22.5 23.3 22.5 L3 22.5 C2 22.5 1.5 22 1.5 21 L1.5 11.5 C1.5 10 2.5 8.5 4.5 8.5Z" fill="url(#ps)"/>
<rect x="5.6" y="20.8" width="14.4" height="4" rx="0.6" fill="#e8f1fc" stroke="#5a9fe2" stroke-width="1.2"/>
</svg>
<svg class="a" style="left:1612px;top:672.7px" width="25" height="25" viewBox="0 0 24 24">
<defs><linearGradient id="py" x1="0" y1="0" x2="1" y2="0"><stop offset="0" stop-color="#eed878"/><stop offset="0.45" stop-color="#dcb53e"/><stop offset="1" stop-color="#b88c2c"/></linearGradient>
<linearGradient id="pf" x1="0" y1="0" x2="1" y2="0"><stop offset="0" stop-color="#d4d4d4"/><stop offset="0.5" stop-color="#b0b0b0"/><stop offset="1" stop-color="#8a8a8a"/></linearGradient></defs>
<g transform="translate(12.3 12) rotate(41)">
<rect x="-3.6" y="-12.4" width="7.2" height="3" rx="1.4" fill="#f0896c"/>
<rect x="-3.6" y="-10.4" width="7.2" height="5.2" fill="url(#pf)"/>
<rect x="-3.6" y="-5.2" width="7.2" height="10.4" fill="url(#py)"/>
<path d="M-3.6 5.2 L3.6 5.2 L0.9 10.4 L-0.9 10.4Z" fill="#d8b070"/>
<path d="M-1.6 9 L1.6 9 L0 12.6Z" fill="#1a1a1a"/>
</g>
</svg>
<div class="t b" style="left:1355.8px;width:600px;text-align:center;top:675.74px;font-size:19.8px;color:#e8301f;font-family:'DejaVu Sans','Liberation Sans',sans-serif;-webkit-text-stroke:1px #e8301f;transform:scaleX(1.06);">X</div>
<div class="a" style="left:37px;top:711.2px;width:1635px;height:50.9px;background:#eeeaee;"></div>
<div class="t " style="left:42.5px;top:718.6px;font-size:15px;">2/21/2014</div>
<div class="t b" style="left:129.5px;top:718.6px;font-size:15px;">[Pending Note Creation]</div>
<div class="t b" style="left:129.5px;top:737.9px;font-size:15px;">Rachael Test 4</div>
<div class="t ver" style="right:1261.7px;top:731.53px;font-size:15.2px;">0.00</div>
<div class="t ver" style="right:1150.5px;top:731.53px;font-size:15.2px;">25.00</div>
<div class="t ver" style="right:1059px;top:731.53px;font-size:15.2px;">0.00</div>
<div class="t ver" style="right:976.2px;top:731.53px;font-size:15.2px;">0.00</div>
<div class="t ver" style="right:880.5px;top:731.53px;font-size:15.2px;">0.00</div>
<div class="t ver" style="right:786px;top:731.53px;font-size:15.2px;">0.00</div>
<div class="t ver" style="right:699.3px;top:731.53px;font-size:15.2px;">0.00</div>
<div class="t ver" style="right:603px;top:731.53px;font-size:15.2px;">0.00</div>
<div class="t ver" style="right:508.79999999999995px;top:731.53px;font-size:15.2px;">0.00</div>
<div class="t ver" style="right:384.29999999999995px;top:731.53px;font-size:15.2px;">-$25.00</div>
<div class="t ver" style="right:270.5px;top:731.53px;font-size:15.2px;">-$25.00</div>
<div class="t ver" style="right:156.70000000000005px;top:731.53px;font-size:15.2px;">$0.00</div>
<svg class="a" style="left:1575.9px;top:723.6px" width="25" height="24.6" viewBox="0 0 26 26" preserveAspectRatio="none">
<defs>
<linearGradient id="pb" x1="0" y1="0" x2="0" y2="1"><stop offset="0" stop-color="#f0f0f0"/><stop offset="0.3" stop-color="#cacaca"/><stop offset="0.42" stop-color="#6a6a6a"/><stop offset="0.52" stop-color="#b4b4b4"/><stop offset="0.8" stop-color="#d0d0d0"/><stop offset="1" stop-color="#9c9c9c"/></linearGradient>
<linearGradient id="pp" x1="0" y1="0" x2="1" y2="1"><stop offset="0" stop-color="#c4dcf8"/><stop offset="0.6" stop-color="#dcebfb"/><stop offset="1" stop-color="#b4d2f4"/></linearGradient>
<linearGradient id="ps" x1="0" y1="0" x2="1" y2="0"><stop offset="0" stop-color="#ffffff" stop-opacity="0.9"/><stop offset="0.18" stop-color="#ffffff" stop-opacity="0"/><stop offset="0.8" stop-color="#000" stop-opacity="0"/><stop offset="1" stop-color="#000" stop-opacity="0.55"/></linearGradient>
</defs>
<path d="M6 1.3 L15.5 1.3 L19.6 5 L19.6 11 L6 11Z" fill="url(#pp)" stroke="#4b94dc" stroke-width="1.3" stroke-linejoin="round"/>
<path d="M15.5 1.5 L15.5 5 L19.4 5Z" fill="#eaf4fe" stroke="#8fbdee" stroke-width="0.6"/>
<path d="M4.5 8.5 L5.5 8.5 L5.5 11.6 L20.1 11.6 L20.1 8.5 L21.5 8.5 C23.6 8.5 24.8 10 24.8 11.5 L24.8 21 C24.8 22 24.3 22.5 23.3 22.5 L3 22.5 C2 22.5 1.5 22 1.5 21 L1.5 11.5 C1.5 10 2.5 8.5 4.5 8.5Z" fill="url(#pb)" stroke="#858585" stroke-width="0.9"/>
<path d="M4.5 8.5 L5.5 8.5 L5.5 11.6 L20.1 11.6 L20.1 8.5 L21.5 8.5 C23.6 8.5 24.8 10 24.8 11.5 L24.8 21 C24.8 22 24.3 22.5 23.3 22.5 L3 22.5 C2 22.5 1.5 22 1.5 21 L1.5 11.5 C1.5 10 2.5 8.5 4.5 8.5Z" fill="url(#ps)"/>
<rect x="5.6" y="20.8" width="14.4" height="4" rx="0.6" fill="#e8f1fc" stroke="#5a9fe2" stroke-width="1.2"/>
</svg>
<svg class="a" style="left:1612px;top:723.6px" width="25" height="25" viewBox="0 0 24 24">
<defs><linearGradient id="py" x1="0" y1="0" x2="1" y2="0"><stop offset="0" stop-color="#eed878"/><stop offset="0.45" stop-color="#dcb53e"/><stop offset="1" stop-color="#b88c2c"/></linearGradient>
<linearGradient id="pf" x1="0" y1="0" x2="1" y2="0"><stop offset="0" stop-color="#d4d4d4"/><stop offset="0.5" stop-color="#b0b0b0"/><stop offset="1" stop-color="#8a8a8a"/></linearGradient></defs>
<g transform="translate(12.3 12) rotate(41)">
<rect x="-3.6" y="-12.4" width="7.2" height="3" rx="1.4" fill="#f0896c"/>
<rect x="-3.6" y="-10.4" width="7.2" height="5.2" fill="url(#pf)"/>
<rect x="-3.6" y="-5.2" width="7.2" height="10.4" fill="url(#py)"/>
<path d="M-3.6 5.2 L3.6 5.2 L0.9 10.4 L-0.9 10.4Z" fill="#d8b070"/>
<path d="M-1.6 9 L1.6 9 L0 12.6Z" fill="#1a1a1a"/>
</g>
</svg>
<div class="t b" style="left:1355.8px;width:600px;text-align:center;top:726.64px;font-size:19.8px;color:#e8301f;font-family:'DejaVu Sans','Liberation Sans',sans-serif;-webkit-text-stroke:1px #e8301f;transform:scaleX(1.06);">X</div>
<div class="a" style="left:37px;top:762.1px;width:1635px;height:50.9px;background:#ffffff;"></div>
<div class="t " style="left:42.5px;top:769.5px;font-size:15px;">1/8/2014</div>
<div class="t b" style="left:129.5px;top:769.5px;font-size:15px;">[Pending Note Creation]</div>
<div class="t b" style="left:129.5px;top:788.8px;font-size:15px;">Rachael Test 4</div>
<div class="t ver" style="right:1261.7px;top:782.43px;font-size:15.2px;">0.00</div>
<div class="t ver" style="right:1150.5px;top:782.43px;font-size:15.2px;">50.00</div>
<div class="t ver" style="right:1059px;top:782.43px;font-size:15.2px;">0.00</div>
<div class="t ver" style="right:976.2px;top:782.43px;font-size:15.2px;">0.00</div>
<div class="t ver" style="right:880.5px;top:782.43px;font-size:15.2px;">0.00</div>
<div class="t ver" style="right:786px;top:782.43px;font-size:15.2px;">0.00</div>
<div class="t ver" style="right:699.3px;top:782.43px;font-size:15.2px;">0.00</div>
<div class="t ver" style="right:603px;top:782.43px;font-size:15.2px;">0.00</div>
<div class="t ver" style="right:508.79999999999995px;top:782.43px;font-size:15.2px;">0.00</div>
<div class="t ver" style="right:384.29999999999995px;top:782.43px;font-size:15.2px;">-$50.00</div>
<div class="t ver" style="right:270.5px;top:782.43px;font-size:15.2px;">-$50.00</div>
<div class="t ver" style="right:156.70000000000005px;top:782.43px;font-size:15.2px;">$0.00</div>
<svg class="a" style="left:1575.9px;top:774.5px" width="25" height="24.6" viewBox="0 0 26 26" preserveAspectRatio="none">
<defs>
<linearGradient id="pb" x1="0" y1="0" x2="0" y2="1"><stop offset="0" stop-color="#f0f0f0"/><stop offset="0.3" stop-color="#cacaca"/><stop offset="0.42" stop-color="#6a6a6a"/><stop offset="0.52" stop-color="#b4b4b4"/><stop offset="0.8" stop-color="#d0d0d0"/><stop offset="1" stop-color="#9c9c9c"/></linearGradient>
<linearGradient id="pp" x1="0" y1="0" x2="1" y2="1"><stop offset="0" stop-color="#c4dcf8"/><stop offset="0.6" stop-color="#dcebfb"/><stop offset="1" stop-color="#b4d2f4"/></linearGradient>
<linearGradient id="ps" x1="0" y1="0" x2="1" y2="0"><stop offset="0" stop-color="#ffffff" stop-opacity="0.9"/><stop offset="0.18" stop-color="#ffffff" stop-opacity="0"/><stop offset="0.8" stop-color="#000" stop-opacity="0"/><stop offset="1" stop-color="#000" stop-opacity="0.55"/></linearGradient>
</defs>
<path d="M6 1.3 L15.5 1.3 L19.6 5 L19.6 11 L6 11Z" fill="url(#pp)" stroke="#4b94dc" stroke-width="1.3" stroke-linejoin="round"/>
<path d="M15.5 1.5 L15.5 5 L19.4 5Z" fill="#eaf4fe" stroke="#8fbdee" stroke-width="0.6"/>
<path d="M4.5 8.5 L5.5 8.5 L5.5 11.6 L20.1 11.6 L20.1 8.5 L21.5 8.5 C23.6 8.5 24.8 10 24.8 11.5 L24.8 21 C24.8 22 24.3 22.5 23.3 22.5 L3 22.5 C2 22.5 1.5 22 1.5 21 L1.5 11.5 C1.5 10 2.5 8.5 4.5 8.5Z" fill="url(#pb)" stroke="#858585" stroke-width="0.9"/>
<path d="M4.5 8.5 L5.5 8.5 L5.5 11.6 L20.1 11.6 L20.1 8.5 L21.5 8.5 C23.6 8.5 24.8 10 24.8 11.5 L24.8 21 C24.8 22 24.3 22.5 23.3 22.5 L3 22.5 C2 22.5 1.5 22 1.5 21 L1.5 11.5 C1.5 10 2.5 8.5 4.5 8.5Z" fill="url(#ps)"/>
<rect x="5.6" y="20.8" width="14.4" height="4" rx="0.6" fill="#e8f1fc" stroke="#5a9fe2" stroke-width="1.2"/>
</svg>
<svg class="a" style="left:1612px;top:774.5px" width="25" height="25" viewBox="0 0 24 24">
<defs><linearGradient id="py" x1="0" y1="0" x2="1" y2="0"><stop offset="0" stop-color="#eed878"/><stop offset="0.45" stop-color="#dcb53e"/><stop offset="1" stop-color="#b88c2c"/></linearGradient>
<linearGradient id="pf" x1="0" y1="0" x2="1" y2="0"><stop offset="0" stop-color="#d4d4d4"/><stop offset="0.5" stop-color="#b0b0b0"/><stop offset="1" stop-color="#8a8a8a"/></linearGradient></defs>
<g transform="translate(12.3 12) rotate(41)">
<rect x="-3.6" y="-12.4" width="7.2" height="3" rx="1.4" fill="#f0896c"/>
<rect x="-3.6" y="-10.4" width="7.2" height="5.2" fill="url(#pf)"/>
<rect x="-3.6" y="-5.2" width="7.2" height="10.4" fill="url(#py)"/>
<path d="M-3.6 5.2 L3.6 5.2 L0.9 10.4 L-0.9 10.4Z" fill="#d8b070"/>
<path d="M-1.6 9 L1.6 9 L0 12.6Z" fill="#1a1a1a"/>
</g>
</svg>
<div class="t b" style="left:1355.8px;width:600px;text-align:center;top:777.54px;font-size:19.8px;color:#e8301f;font-family:'DejaVu Sans','Liberation Sans',sans-serif;-webkit-text-stroke:1px #e8301f;transform:scaleX(1.06);">X</div>
<div class="a" style="left:37px;top:813.0px;width:1635px;height:50.9px;background:#eeeaee;"></div>
<div class="t " style="left:42.5px;top:820.4px;font-size:15px;">12/12/2013</div>
<div class="t b" style="left:129.5px;top:820.4px;font-size:15px;">[Pending Note Creation]</div>
<div class="t b" style="left:129.5px;top:839.7px;font-size:15px;">Rachael Test 4</div>
<div class="t ver" style="right:1261.7px;top:833.33px;font-size:15.2px;">0.00</div>
<div class="t ver" style="right:1150.5px;top:833.33px;font-size:15.2px;">5.00</div>
<div class="t ver" style="right:1059px;top:833.33px;font-size:15.2px;">0.00</div>
<div class="t ver" style="right:976.2px;top:833.33px;font-size:15.2px;">0.00</div>
<div class="t ver" style="right:880.5px;top:833.33px;font-size:15.2px;">0.00</div>
<div class="t ver" style="right:786px;top:833.33px;font-size:15.2px;">0.00</div>
<div class="t ver" style="right:699.3px;top:833.33px;font-size:15.2px;">0.00</div>
<div class="t ver" style="right:603px;top:833.33px;font-size:15.2px;">0.00</div>
<div class="t ver" style="right:508.79999999999995px;top:833.33px;font-size:15.2px;">0.00</div>
<div class="t ver" style="right:384.29999999999995px;top:833.33px;font-size:15.2px;">-$5.00</div>
<div class="t ver" style="right:270.5px;top:833.33px;font-size:15.2px;">$0.00</div>
<div class="t ver" style="right:156.70000000000005px;top:833.33px;font-size:15.2px;">-$5.00</div>
<svg class="a" style="left:1575.9px;top:825.4px" width="25" height="24.6" viewBox="0 0 26 26" preserveAspectRatio="none">
<defs>
<linearGradient id="pb" x1="0" y1="0" x2="0" y2="1"><stop offset="0" stop-color="#f0f0f0"/><stop offset="0.3" stop-color="#cacaca"/><stop offset="0.42" stop-color="#6a6a6a"/><stop offset="0.52" stop-color="#b4b4b4"/><stop offset="0.8" stop-color="#d0d0d0"/><stop offset="1" stop-color="#9c9c9c"/></linearGradient>
<linearGradient id="pp" x1="0" y1="0" x2="1" y2="1"><stop offset="0" stop-color="#c4dcf8"/><stop offset="0.6" stop-color="#dcebfb"/><stop offset="1" stop-color="#b4d2f4"/></linearGradient>
<linearGradient id="ps" x1="0" y1="0" x2="1" y2="0"><stop offset="0" stop-color="#ffffff" stop-opacity="0.9"/><stop offset="0.18" stop-color="#ffffff" stop-opacity="0"/><stop offset="0.8" stop-color="#000" stop-opacity="0"/><stop offset="1" stop-color="#000" stop-opacity="0.55"/></linearGradient>
</defs>
<path d="M6 1.3 L15.5 1.3 L19.6 5 L19.6 11 L6 11Z" fill="url(#pp)" stroke="#4b94dc" stroke-width="1.3" stroke-linejoin="round"/>
<path d="M15.5 1.5 L15.5 5 L19.4 5Z" fill="#eaf4fe" stroke="#8fbdee" stroke-width="0.6"/>
<path d="M4.5 8.5 L5.5 8.5 L5.5 11.6 L20.1 11.6 L20.1 8.5 L21.5 8.5 C23.6 8.5 24.8 10 24.8 11.5 L24.8 21 C24.8 22 24.3 22.5 23.3 22.5 L3 22.5 C2 22.5 1.5 22 1.5 21 L1.5 11.5 C1.5 10 2.5 8.5 4.5 8.5Z" fill="url(#pb)" stroke="#858585" stroke-width="0.9"/>
<path d="M4.5 8.5 L5.5 8.5 L5.5 11.6 L20.1 11.6 L20.1 8.5 L21.5 8.5 C23.6 8.5 24.8 10 24.8 11.5 L24.8 21 C24.8 22 24.3 22.5 23.3 22.5 L3 22.5 C2 22.5 1.5 22 1.5 21 L1.5 11.5 C1.5 10 2.5 8.5 4.5 8.5Z" fill="url(#ps)"/>
<rect x="5.6" y="20.8" width="14.4" height="4" rx="0.6" fill="#e8f1fc" stroke="#5a9fe2" stroke-width="1.2"/>
</svg>
<svg class="a" style="left:1612px;top:825.4px" width="25" height="25" viewBox="0 0 24 24">
<defs><linearGradient id="py" x1="0" y1="0" x2="1" y2="0"><stop offset="0" stop-color="#eed878"/><stop offset="0.45" stop-color="#dcb53e"/><stop offset="1" stop-color="#b88c2c"/></linearGradient>
<linearGradient id="pf" x1="0" y1="0" x2="1" y2="0"><stop offset="0" stop-color="#d4d4d4"/><stop offset="0.5" stop-color="#b0b0b0"/><stop offset="1" stop-color="#8a8a8a"/></linearGradient></defs>
<g transform="translate(12.3 12) rotate(41)">
<rect x="-3.6" y="-12.4" width="7.2" height="3" rx="1.4" fill="#f0896c"/>
<rect x="-3.6" y="-10.4" width="7.2" height="5.2" fill="url(#pf)"/>
<rect x="-3.6" y="-5.2" width="7.2" height="10.4" fill="url(#py)"/>
<path d="M-3.6 5.2 L3.6 5.2 L0.9 10.4 L-0.9 10.4Z" fill="#d8b070"/>
<path d="M-1.6 9 L1.6 9 L0 12.6Z" fill="#1a1a1a"/>
</g>
</svg>
<div class="t b" style="left:1355.8px;width:600px;text-align:center;top:828.44px;font-size:19.8px;color:#e8301f;font-family:'DejaVu Sans','Liberation Sans',sans-serif;-webkit-text-stroke:1px #e8301f;transform:scaleX(1.06);">X</div>
<div class="a" style="left:37px;top:863.9px;width:1635px;height:50.9px;background:#ffffff;"></div>
<div class="t " style="left:42.5px;top:871.3px;font-size:15px;">12/9/2013</div>
<div class="t b" style="left:129.5px;top:871.3px;font-size:15px;">&nbsp;&amp; 90832 Psychotherapy 30 min.</div>
<div class="t b" style="left:129.5px;top:890.6px;font-size:15px;">Ola Test 4, MD</div>
<div class="t ver" style="right:1261.7px;top:884.23px;font-size:15.2px;">68.74</div>
<div class="t ver" style="right:1150.5px;top:884.23px;font-size:15.2px;">0.00</div>
<div class="t ver" style="right:1059px;top:884.23px;font-size:15.2px;">0.00</div>
<div class="t ver" style="right:976.2px;top:884.23px;font-size:15.2px;">0.00</div>
<div class="t ver" style="right:880.5px;top:884.23px;font-size:15.2px;">0.00</div>
<div class="t ver" style="right:786px;top:884.23px;font-size:15.2px;">0.00</div>
<div class="t ver" style="right:699.3px;top:884.23px;font-size:15.2px;">0.00</div>
<div class="t ver" style="right:603px;top:884.23px;font-size:15.2px;">0.00</div>
<div class="t ver" style="right:508.79999999999995px;top:884.23px;font-size:15.2px;">0.00</div>
<div class="t ver" style="right:384.29999999999995px;top:884.23px;font-size:15.2px;">$68.74</div>
<div class="t ver" style="right:270.5px;top:884.23px;font-size:15.2px;">$0.00</div>
<div class="t ver" style="right:156.70000000000005px;top:884.23px;font-size:15.2px;">$68.74</div>
<svg class="a" style="left:1575.9px;top:876.3px" width="25" height="24.6" viewBox="0 0 26 26" preserveAspectRatio="none">
<defs>
<linearGradient id="pb" x1="0" y1="0" x2="0" y2="1"><stop offset="0" stop-color="#f0f0f0"/><stop offset="0.3" stop-color="#cacaca"/><stop offset="0.42" stop-color="#6a6a6a"/><stop offset="0.52" stop-color="#b4b4b4"/><stop offset="0.8" stop-color="#d0d0d0"/><stop offset="1" stop-color="#9c9c9c"/></linearGradient>
<linearGradient id="pp" x1="0" y1="0" x2="1" y2="1"><stop offset="0" stop-color="#c4dcf8"/><stop offset="0.6" stop-color="#dcebfb"/><stop offset="1" stop-color="#b4d2f4"/></linearGradient>
<linearGradient id="ps" x1="0" y1="0" x2="1" y2="0"><stop offset="0" stop-color="#ffffff" stop-opacity="0.9"/><stop offset="0.18" stop-color="#ffffff" stop-opacity="0"/><stop offset="0.8" stop-color="#000" stop-opacity="0"/><stop offset="1" stop-color="#000" stop-opacity="0.55"/></linearGradient>
</defs>
<path d="M6 1.3 L15.5 1.3 L19.6 5 L19.6 11 L6 11Z" fill="url(#pp)" stroke="#4b94dc" stroke-width="1.3" stroke-linejoin="round"/>
<path d="M15.5 1.5 L15.5 5 L19.4 5Z" fill="#eaf4fe" stroke="#8fbdee" stroke-width="0.6"/>
<path d="M4.5 8.5 L5.5 8.5 L5.5 11.6 L20.1 11.6 L20.1 8.5 L21.5 8.5 C23.6 8.5 24.8 10 24.8 11.5 L24.8 21 C24.8 22 24.3 22.5 23.3 22.5 L3 22.5 C2 22.5 1.5 22 1.5 21 L1.5 11.5 C1.5 10 2.5 8.5 4.5 8.5Z" fill="url(#pb)" stroke="#858585" stroke-width="0.9"/>
<path d="M4.5 8.5 L5.5 8.5 L5.5 11.6 L20.1 11.6 L20.1 8.5 L21.5 8.5 C23.6 8.5 24.8 10 24.8 11.5 L24.8 21 C24.8 22 24.3 22.5 23.3 22.5 L3 22.5 C2 22.5 1.5 22 1.5 21 L1.5 11.5 C1.5 10 2.5 8.5 4.5 8.5Z" fill="url(#ps)"/>
<rect x="5.6" y="20.8" width="14.4" height="4" rx="0.6" fill="#e8f1fc" stroke="#5a9fe2" stroke-width="1.2"/>
</svg>
<svg class="a" style="left:1612px;top:876.3px" width="25" height="25" viewBox="0 0 24 24">
<defs><linearGradient id="py" x1="0" y1="0" x2="1" y2="0"><stop offset="0" stop-color="#eed878"/><stop offset="0.45" stop-color="#dcb53e"/><stop offset="1" stop-color="#b88c2c"/></linearGradient>
<linearGradient id="pf" x1="0" y1="0" x2="1" y2="0"><stop offset="0" stop-color="#d4d4d4"/><stop offset="0.5" stop-color="#b0b0b0"/><stop offset="1" stop-color="#8a8a8a"/></linearGradient></defs>
<g transform="translate(12.3 12) rotate(41)">
<rect x="-3.6" y="-12.4" width="7.2" height="3" rx="1.4" fill="#f0896c"/>
<rect x="-3.6" y="-10.4" width="7.2" height="5.2" fill="url(#pf)"/>
<rect x="-3.6" y="-5.2" width="7.2" height="10.4" fill="url(#py)"/>
<path d="M-3.6 5.2 L3.6 5.2 L0.9 10.4 L-0.9 10.4Z" fill="#d8b070"/>
<path d="M-1.6 9 L1.6 9 L0 12.6Z" fill="#1a1a1a"/>
</g>
</svg>
<div class="t b" style="left:1355.8px;width:600px;text-align:center;top:879.34px;font-size:19.8px;color:#e8301f;font-family:'DejaVu Sans','Liberation Sans',sans-serif;-webkit-text-stroke:1px #e8301f;transform:scaleX(1.06);">X</div>
<div class="a" style="left:37px;top:506px;width:1635px;height:2px;background:#c4c2c4;"></div>
<div class="a" style="left:37px;top:557px;width:1635px;height:2px;background:#c4c2c4;"></div>
<div class="a" style="left:37px;top:608px;width:1635px;height:2px;background:#c4c2c4;"></div>
<div class="a" style="left:37px;top:659px;width:1635px;height:2px;background:#c4c2c4;"></div>
<div class="a" style="left:37px;top:710px;width:1635px;height:2px;background:#c4c2c4;"></div>
<div class="a" style="left:37px;top:761px;width:1635px;height:2px;background:#c4c2c4;"></div>
<div class="a" style="left:37px;top:812px;width:1635px;height:2px;background:#c4c2c4;"></div>
<div class="a" style="left:37px;top:863px;width:1635px;height:2px;background:#c4c2c4;"></div>
<div class="a" style="left:36px;top:914px;width:1654px;height:2px;background:#bcbabc;"></div>
<div class="a" style="left:36px;top:456px;width:1636px;height:1px;background:#a6a4a6;"></div>
<div class="a" style="left:1672px;top:456px;width:18px;height:458px;background:#ffffff;border-left:1px solid #b0b0b0;"></div>
<div class="a" style="left:1673px;top:897px;width:17px;height:1px;background:#d0d0d0;"></div>
<div class="a" style="left:1689px;top:456px;width:1px;height:458px;background:#dcdcdc;"></div>
<div class="a" style="left:1673px;top:743px;width:17px;height:154px;background:#bbbbbb;"></div>
<div class="a" style="left:1673px;top:474px;width:17px;height:2px;background:#c4c4c4;"></div>
<svg class="a" style="left:1674px;top:462px" width="14" height="8" viewBox="0 0 14 8"><path d="M1.5 7 L7 1.5 L12.5 7Z" fill="#c2c2c2"/></svg>
<svg class="a" style="left:1674px;top:900px" width="14" height="8" viewBox="0 0 14 8"><path d="M1.5 1 L7 6.5 L12.5 1Z" fill="#b0b0b0"/></svg>
<div class="a" style="left:34px;top:916px;width:1660px;height:43px;background:#dedcde;border-bottom:1px solid #a8a8a8;"></div>
<div class="a" style="left:34px;top:916px;width:369px;height:44px;background:#b4dafb;"></div>
<div class="t b" style="left:42px;top:929.96px;font-size:18px;">Refresh All From Note</div>
<div class="t b" style="left:265px;top:929.96px;font-size:18px;">Add Late Fee</div>
<div class="a" style="left:1503px;top:916px;width:191px;height:43px;background:#b4dafb;"></div>
<div class="t b" style="left:1515.5px;top:929.96px;font-size:18px;">Prepayment Report</div>
<div class="a" style="left:0px;top:0px;width:1697px;height:1px;background:#000000;"></div>
<div class="a" style="left:0px;top:1px;width:1697px;height:2px;background:#1a1adf;background:linear-gradient(#0a0aa0,#2a2af0);"></div>
<div class="a" style="left:0px;top:3px;width:1px;height:989px;background:#7c7cf0;"></div>
<div class="a" style="left:1px;top:3px;width:1px;height:989px;background:#2020ee;"></div>
<div class="a" style="left:2px;top:3px;width:1px;height:989px;background:#8e8ee8;"></div>
<div class="a" style="left:3px;top:160px;width:1px;height:828px;background:#fffdf8;"></div>
<div class="a" style="left:1692px;top:162px;width:1px;height:826px;background:#fffdf8;"></div>
<div class="a" style="left:1693px;top:3px;width:1px;height:986px;background:#8886f0;"></div>
<div class="a" style="left:1694px;top:1px;width:2px;height:990px;background:#2222e4;"></div>
<div class="a" style="left:1696px;top:0px;width:1px;height:992px;background:#d4d0c8;"></div>
<div class="a" style="left:3px;top:987px;width:1690px;height:1px;background:#fffdf8;"></div>
<div class="a" style="left:0px;top:988px;width:1696px;height:1px;background:#7e7cf0;"></div>
<div class="a" style="left:0px;top:989px;width:1696px;height:2px;background:#2626e0;"></div>
<div class="a" style="left:0px;top:991px;width:1697px;height:1px;background:#8e8a78;"></div>
<div class="a" style="left:0px;top:0px;width:1697px;height:1px;background:#000000;"></div>
<div class="a" style="left:0px;top:1px;width:1697px;height:2px;background:#1a1adf;background:linear-gradient(#0a0aa0,#2a2af0);"></div>
<div class="a" style="left:0px;top:0px;width:2px;height:992px;background:#2222ee;"></div>
<div class="a" style="left:1693px;top:0px;width:3px;height:992px;background:#2222ee;"></div>
<div class="a" style="left:1696px;top:0px;width:1px;height:992px;background:#d4d0c8;"></div>
<div class="a" style="left:0px;top:988px;width:1697px;height:3px;background:#2222ee;"></div>
<div class="a" style="left:0px;top:991px;width:1697px;height:1px;background:#d4d0c8;"></div>
<div class="a" style="left:30px;top:419px;width:1655px;height:82px;border:5px solid #ee6352;border-right-width:6px;box-sizing:content-box;box-shadow:0 2px 2px rgba(45,55,65,0.9), inset 1px 2px 1.5px rgba(45,60,75,0.9);"></div>
</div>
</body></html>
